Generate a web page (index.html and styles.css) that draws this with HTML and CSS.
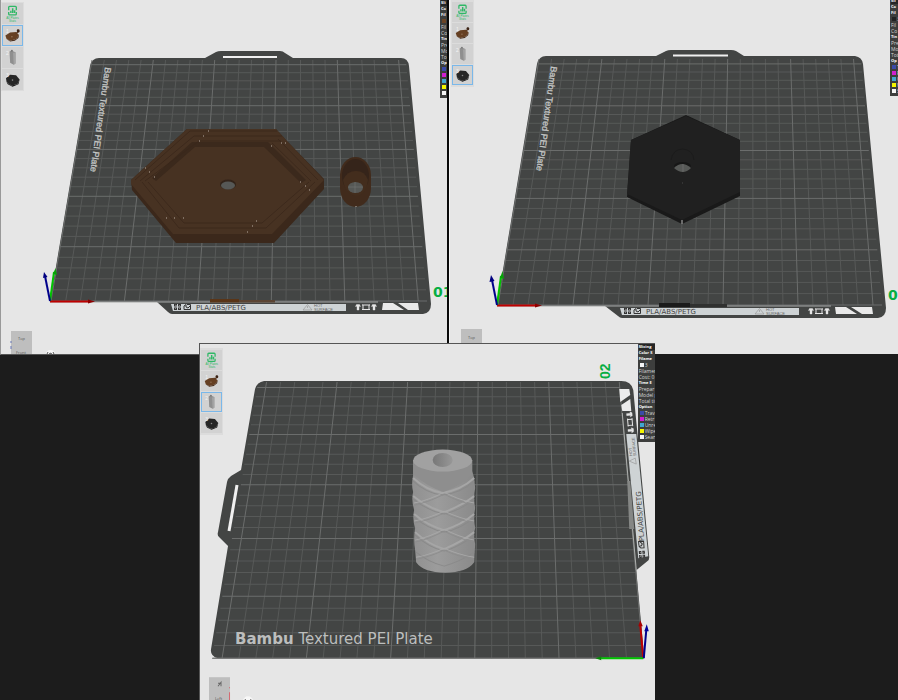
FILE: index.html
```html
<!DOCTYPE html>
<html lang="en">
<head>
    <meta charset="UTF-8">
    <meta name="viewport" content="width=device-width, initial-scale=1.0">
    <title>Plate Preview</title>
    <link rel="stylesheet" href="styles.css">
</head>
<body>

    <!-- shared icons -->
    <svg class="defs" aria-hidden="true">
        <symbol id="icon-stats" viewBox="0 0 20 20">
            <path d="M6 6.500V3.500Q6 2.500 7 2.500H13Q14 2.500 14 3.500V6.500M6 8.500V10.500Q6 11.500 7 11.500H13Q14 11.500 14 10.500V8.500" fill="none" stroke="#2fb866" stroke-width="1.400"/>
            <path d="M7.500 9.500V7H9V9.500ZM9.400 9.500V4.500H11V9.500ZM11.400 9.500V6.500H13V9.500Z" fill="#2fb866"/>
        </symbol>
        <symbol id="icon-base" viewBox="2 2 16 16">
            <path d="M4 10L8 7.500L13 7L15.500 9.500L13 13L8 14.500L5 13Z" fill="#664023"/>
            <path d="M5 13L8 14.500L13 13L15.500 9.500L15 12L12 14.500L8 15Z" fill="#4a2d1a"/>
            <circle cx="9.500" cy="11" r="0.600" fill="#9b7a60"/>
            <path d="M12.500 8.500L14 6.500L14 5L15.500 6L16 7L14 8Z" fill="#573620"/>
            <circle cx="14.800" cy="6" r="1.200" fill="#3b2417"/>
        </symbol>
        <symbol id="icon-handle" viewBox="2 2 16 16">
            <path d="M7.500 5L9 4L12.500 5.500V15L11 16L8 14.500Z" fill="#8f8f8f"/>
            <path d="M10.500 6L12.500 5.500V15L11 16Z" fill="#a4a4a4"/>
            <circle cx="9.500" cy="4.300" r="0.800" fill="#777"/>
        </symbol>
        <symbol id="icon-cap" viewBox="2 2 16 16">
            <path d="M4.500 9L8 6L13 6.500L16 10L14 14L9 15L5 12Z" fill="#262626"/>
            <path d="M5 12L9 15L14 14L16 10L15 14L10 16L6 14Z" fill="#161616"/>
            <circle cx="10" cy="10.500" r="0.700" fill="#888"/>
        </symbol>
        <symbol id="strip-icons" viewBox="0 0 18 8">
            <path d="M0 1H3V3.500H0ZM4 1H7V3.500H4ZM0 4.500H3V7H0ZM4 4.500H7V7H4Z" fill="#333"/>
            <path d="M1 2L3 3M5 5L6 6M5 3L6 2M1 6L2 5" stroke="#ddd" stroke-width="0.500"/>
            <path d="M10 3V6.500H16.500V1.500H13M10 3L12 1.500V4L14 5L16 3" fill="none" stroke="#333"/>
        </symbol>
        <symbol id="heat-icons" viewBox="0 0 24 8">
            <path d="M1.500 3.500L2.500 1.500H5.500L6.500 3.500L5 3.300V7H3V3.300ZM17.500 3.500L18.500 1.500H21.500L22.500 3.500L21 3.300V7H19V3.300Z" fill="#e6e6e6" stroke="#e6e6e6" stroke-width="0.400"/>
            <rect x="9" y="2" width="6" height="4.500" fill="none" stroke="#e6e6e6"/>
            <path d="M8 2H9M8 6.500H9M15 2H16M15 6.500H16" stroke="#e6e6e6"/>
        </symbol>
    </svg>

    <main class="desktop">

        <section class="viewer viewer-first" aria-label="Plate 1">
            <svg class="scene" viewBox="1 0 446 354" preserveAspectRatio="xMidYMin meet">
                <path class="plate" d="M50 302L90 66Q92 58 99 58H205L216 52Q218 51 221 51H280Q283 51 285 53L293 58H401Q408 58 409 66L431 304Q431 313 423 314H172Q170 314 168 312L157 302Z"/>
                <path class="slot" d="M223 57H277"/>
                <g class="grid" data-quad="51 301 427 301 406 60 92 60"></g>
                <path d="M50 302H378" stroke="#a5a7a6"/>
                <text class="plate-name" transform="translate(105 67) rotate(98)">Bambu Textured PEI Plate</text>

                <path d="M171 304H346V311H173Z" fill="#ced3d5"/>
                <use href="#strip-icons" x="174" y="303" width="18" height="8"/>
                <text class="strip-text" x="196" y="310">PLA/ABS/PETG</text>
                <path d="M303 310L307.500 304.500L312 310ZM307.500 306V308" fill="none" stroke="#999" stroke-width="0.700"/>
                <text class="hot-text" x="314" y="307">HOT</text>
                <text class="hot-text" x="314" y="311">SURFACE</text>
                <use href="#heat-icons" x="354" y="303" width="24" height="8"/>
                <path d="M383 303H393L404 310H382ZM398 303H418L419 310H408Z" fill="#e9e9e9"/>
                <path d="M210 299H239V302.500H210Z" fill="#5a3517"/>
                <path d="M239 300H275V302.500H239Z" fill="#5a4433"/>

                <!-- hexagon base -->
                <path d="M131 180L187 129H276L286 140L324 179V189L274 243H176L132 190Z" fill="#3b281b"/>
                <path d="M131 180L187 129H276L286 140L324 180L272 234H173L131 184Z" fill="#473222"/>
                <path d="M152 178L192 142H268L306 180L301 183L264 147H195L156 181Z" fill="#3b291c"/>
                <g fill="none" stroke="#3a271a" stroke-width="0.800">
                    <path d="M135 180L190 131H277M140 181L194 136H282M145 181L199 141H281"/>
                    <path d="M142 182L179 228H266L315 182M148 182L184 223H262L309 182"/>
                    <path d="M272 143L311 181M278 139L318 180"/>
                </g>
                <ellipse cx="228" cy="184.500" rx="8" ry="5" fill="#33241a"/>
                <ellipse cx="228" cy="185.500" rx="7" ry="4" fill="#565856"/>
                <g class="seams">
                    <path d="M208 131h1M203 136h1M199 141h1M271 146h1M281 143h1M285 143h1M145 168h1M149 172h1M154 177h1M166 218h1M174 218h1M183 218h1M247 232h1M252 226h1M256 221h1M300 182h1M305 186h1M309 190h1"/>
                </g>

                <!-- ring -->
                <path d="M340 175A15.500 18 0 0 1 371 175V188A15.500 19 0 0 1 340 188Z" fill="#412b1c"/>
                <ellipse cx="355.500" cy="176" rx="13.500" ry="17" fill="#35241a"/>
                <path d="M343 180Q347 171 356 171Q365 171 368 180Q366 195 356 196Q345 194 343 180Z" fill="#432d1d"/>
                <ellipse cx="355.500" cy="187.500" rx="7.500" ry="5.500" fill="#565856"/>
                <path d="M348 187H363M355 182V193" stroke="#747674" stroke-width="0.600"/>
                <path d="M356 206V207" stroke="#bbb"/>

                <path class="axis axis-x" d="M50 301.500H90"/><path d="M88 299.500L95 301.500L88 303.500Z" fill="#8e0000"/>
                <path class="axis axis-y" d="M50 301L54 272"/><path d="M53 274L55.500 268L57 275Z" fill="#08a008"/>
                <path class="axis axis-z" d="M50 301L45 276"/><path d="M43 278L44 272L47.500 277Z" fill="#00007f"/>
                <text class="plate-number" x="433" y="297">01</text>

                <path d="M11 331H32V354H11Z" fill="#bebebe"/>
                <path d="M11 341V343M11 346V349" stroke="#6879b8"/>
                <text class="cube-text" x="18" y="340">Top</text>
                <text class="cube-text" x="16" y="354">Front</text>
                <circle cx="50.500" cy="355" r="5" fill="#f7f7f7"/>
                <path d="M48 352L47 354M53 352L54 354M49 354L51 353L52 355" fill="none" stroke="#555"/>
            </svg>
            <nav class="plates plates-loose" aria-label="Plates">
                <button class="plate-button" aria-label="All plates stats"><svg class="icon"><use href="#icon-stats"/></svg><span class="caption">All Plates<br>Stats</span></button>
                <button class="plate-button selected" aria-label="Plate 1"><svg class="icon"><use href="#icon-base"/></svg><span class="index">1</span></button>
                <button class="plate-button" aria-label="Plate 2"><svg class="icon"><use href="#icon-handle"/></svg><span class="index">2</span></button>
                <button class="plate-button" aria-label="Plate 3"><svg class="icon"><use href="#icon-cap"/></svg><span class="index">3</span></button>
            </nav>
            <aside class="legend legend-narrow">
                <h2>Sli</h2>
                <h3>Co</h3>
                <h3>Fil</h3>
                <p><i class="swatch brown"></i></p>
                <p>Fil</p>
                <p>Co</p>
                <h3>Tin</h3>
                <p>Pre</p>
                <p>Mo</p>
                <p>To</p>
                <h3>Op</h3>
                <p><i class="swatch blue"></i></p>
                <p><i class="swatch magenta"></i></p>
                <p><i class="swatch cyan"></i></p>
                <p><i class="swatch yellow"></i></p>
                <p><i class="swatch white"></i></p>
            </aside>
        </section>

        <section class="viewer viewer-second" aria-label="Plate 3">
            <svg class="scene" viewBox="450 0 448 354" preserveAspectRatio="xMidYMin meet">
                <path class="plate" d="M497 306L537 64Q539 56 546 56H656L666 51Q668 50 671 50H731Q734 50 736 51L744 56H855Q862 57 863 64L886 308Q886 317 878 318H622Q620 318 618 316L605 306Z"/>
                <path class="slot" d="M673 55.500H728"/>
                <g class="grid" data-quad="498 305 882 305 861 59 539 59"></g>
                <path d="M497 306H831" stroke="#a5a7a6"/>
                <text class="plate-name" transform="translate(551 66) rotate(98)">Bambu Textured PEI Plate</text>

                <path d="M620 308H799V315H622Z" fill="#ced3d5"/>
                <use href="#strip-icons" x="624" y="307" width="18" height="8"/>
                <text class="strip-text" x="646" y="314">PLA/ABS/PETG</text>
                <path d="M755 314L759.500 308.500L764 314ZM759.500 310V312" fill="none" stroke="#999" stroke-width="0.700"/>
                <text class="hot-text" x="766" y="311">HOT</text>
                <text class="hot-text" x="766" y="315">SURFACE</text>
                <use href="#heat-icons" x="807" y="307" width="24" height="8"/>
                <path d="M835 307H846L857 314H836ZM851 307H872L873 314H862Z" fill="#e9e9e9"/>
                <path d="M659 303H690V307H659Z" fill="#1b1b1b"/>
                <path d="M690 304H727V307H690Z" fill="#303130"/>

                <path d="M686 115L740 140V196L682 224L627 197L631 140Z" fill="#191919"/>
                <path d="M686 116L740 140V192L682 220L627 194L631 140Z" fill="#202020"/>
                <path d="M671 160Q673 149 683 149Q693 150 694 160" fill="none" stroke="#1b1b1b"/>
                <ellipse cx="682.500" cy="166" rx="8.500" ry="4" fill="#171717"/>
                <path d="M674 168Q682 160 691 168Q683 176 674 168Z" fill="#575957"/>
                <path d="M683 164V172" stroke="#777" stroke-width="0.600"/>
                <path d="M682 220V224" stroke="#bdbdbd"/>
                <path d="M682 183H683" stroke="#484848"/>

                <path class="axis axis-x" d="M497 305.500H537"/><path d="M535 303.500L542 305.500L535 307.500Z" fill="#8e0000"/>
                <path class="axis axis-y" d="M497 305L501 276"/><path d="M500 278L502.500 271L504 279Z" fill="#08a008"/>
                <path class="axis axis-z" d="M497 305L492 280"/><path d="M489.500 282L491 275L494.500 281Z" fill="#00007f"/>
                <text class="plate-number" x="888" y="300">0</text>

                <path d="M461 329H482V343H461Z" fill="#bebebe"/>
                <text class="cube-text" x="468" y="339">Top</text>
            </svg>
            <nav class="plates" aria-label="Plates">
                <button class="plate-button" aria-label="All plates stats"><svg class="icon"><use href="#icon-stats"/></svg><span class="caption">All Plates<br>Stats</span></button>
                <button class="plate-button" aria-label="Plate 1"><svg class="icon"><use href="#icon-base"/></svg><span class="index">1</span></button>
                <button class="plate-button" aria-label="Plate 2"><svg class="icon"><use href="#icon-handle"/></svg><span class="index">2</span></button>
                <button class="plate-button selected" aria-label="Plate 3"><svg class="icon"><use href="#icon-cap"/></svg><span class="index">3</span></button>
            </nav>
            <aside class="legend legend-edge">
                <h2>Sli</h2>
                <h3>Co</h3>
                <h3>Fil</h3>
                <p><i class="swatch black"></i>3</p>
                <p>Fil</p>
                <p>Co</p>
                <h3>Tin</h3>
                <p>Pre</p>
                <p>Mo</p>
                <p>Tot</p>
                <h3>Op</h3>
                <p><i class="swatch blue"></i>T</p>
                <p><i class="swatch magenta"></i>R</p>
                <p><i class="swatch cyan"></i>U</p>
                <p><i class="swatch yellow"></i>W</p>
                <p><i class="swatch white"></i>S</p>
            </aside>
        </section>

        <section class="viewer viewer-front" aria-label="Plate 2">
            <svg class="scene" viewBox="201 344 454 356" preserveAspectRatio="xMidYMin meet">
                <defs>
                    <linearGradient id="tube" x1="0" x2="1">
                        <stop offset="0" stop-color="#909090"/>
                        <stop offset="0.400" stop-color="#9c9c9c"/>
                        <stop offset="1" stop-color="#8a8a8a"/>
                    </linearGradient>
                    <linearGradient id="bore" x1="0" x2="1">
                        <stop offset="0" stop-color="#777"/>
                        <stop offset="1" stop-color="#979797"/>
                    </linearGradient>
                </defs>
                <path class="plate" d="M265 381H622Q632 381 634 390L650 557Q650 560 648 561L637 570L645 658H219Q211 656 212 649L229 546L220 537Q218 535 219 532L228 482Q229 478 232 476L242 470L256 389Q258 382 265 381Z"/>
                <path d="M238 485L230 531" stroke="#f0f0f0" stroke-width="3"/>
                <g class="grid" data-quad="644 658 213 658 259 382 620 382"></g>
                <path d="M214 658H644" stroke="#777977"/>
                <text class="plate-title" x="236" y="644"><tspan class="brand">Bambu</tspan> Textured PEI Plate</text>

                <path d="M620 389H630L631 395L621 402ZM622 405L631 399L632 411H623Z" fill="#ececec"/>
                <use href="#heat-icons" transform="translate(634 410) rotate(85)" width="24" height="8"/>
                <path d="M623 413L637 570" stroke="#aeb0ae" stroke-width="1"/>
                <path d="M628 481L631 481L635 529H630Z" fill="#858785"/>
                <path d="M627 434H637L649 556L639 558Z" fill="#ced3d5"/>
                <text class="hot-text" transform="translate(633 456) rotate(-95)">HOT</text>
                <text class="hot-text" transform="translate(637 456) rotate(-95)">SURFACE</text>
                <path d="M630 461L636 458L637 464Z" fill="none" stroke="#999" stroke-width="0.700"/>
                <text class="strip-text" transform="translate(645 541) rotate(-94)">PLA/ABS/PETG</text>
                <use href="#strip-icons" transform="translate(639 558) rotate(-94)" width="18" height="8"/>

                <!-- grip -->
                <path d="M414 460V475Q412 485 414 492Q412 500 415 510Q413 519 416 528Q414 540 416 550L417 562Q424 572 446 572.500Q468 572 475 562L476 544Q474 535 476 528Q474 518 476 508Q474 498 476 488L475 478L473 471V460Z" fill="url(#tube)"/>
                <g fill="none" stroke="#a6a6a6" stroke-width="2">
                    <path d="M414 478Q427 490 443 493Q462 490 475 478M414 496Q429 508 445 512Q462 506 475 496M415 514Q429 526 445 530Q462 525 475 514M416 532Q429 544 445 549Q462 542 475 532"/>
                </g>
                <g fill="none" stroke="#8a8a8a" stroke-width="1">
                    <path d="M414 481Q427 493 443 495Q462 493 475 481M414 499Q429 511 445 514Q462 510 475 499M415 517Q429 529 445 532Q462 529 475 517M416 535Q429 547 445 551Q462 546 475 535M417 552Q429 562 445 566Q462 561 475 552"/>
                </g>
                <g fill="none" stroke="#a8a8a8" stroke-width="1">
                    <path d="M415 503Q430 500 445 492Q460 500 475 503M415 521Q430 518 445 511Q460 518 475 521M416 540Q430 537 445 529Q460 537 475 540M417 557Q430 555 445 548Q460 555 475 557"/>
                </g>
                <g fill="none" stroke="#8d8d8d" stroke-width="1">
                    <path d="M415 505Q430 502 445 494Q460 502 475 505M415 523Q430 520 445 513Q460 520 475 523M416 542Q430 539 445 531Q460 539 475 542M417 559Q430 557 445 550Q460 557 475 559"/>
                </g>
                <path d="M414 460V474Q427 486 444 492Q462 486 473 474V460Z" fill="#8e8e8e"/>
                <ellipse cx="443.500" cy="460.500" rx="29.500" ry="11" fill="#a1a1a1"/>
                <ellipse cx="443.500" cy="460" rx="10" ry="7" fill="url(#bore)"/>

                <path class="axis axis-x" d="M644 658L641 625"/><path d="M639 626L641 620L643.500 626Z" fill="#a80000"/>
                <path class="axis axis-y" d="M644 658H602"/><path d="M602 656L596 658L602 660Z" fill="#078a07"/>
                <path class="axis axis-z" d="M644.500 658L647 630"/><path d="M645 631L647.500 624L649.500 631Z" fill="#00009a"/>
                <text class="plate-number number-side" transform="translate(611 379) rotate(-90)">02</text>

                <path d="M210 677H231V700H210Z" fill="#bebebe"/>
                <path d="M230.500 687V688M230.500 692V700" stroke="#d56a72"/>
                <path d="M219 686L222 682V686M219 683H222" fill="none" stroke="#666"/>
                <text class="cube-text" x="216" y="700">Left</text>
                <circle cx="249" cy="701" r="5" fill="#f7f7f7"/>
                <path d="M246 699L247 701M252 699L251 701" stroke="#555"/>
            </svg>
            <nav class="plates plates-front" aria-label="Plates">
                <button class="plate-button" aria-label="All plates stats"><svg class="icon"><use href="#icon-stats"/></svg><span class="caption">All Plates<br>Stats</span></button>
                <button class="plate-button" aria-label="Plate 1"><svg class="icon"><use href="#icon-base"/></svg><span class="index">1</span></button>
                <button class="plate-button selected" aria-label="Plate 2"><svg class="icon"><use href="#icon-handle"/></svg><span class="index">2</span></button>
                <button class="plate-button" aria-label="Plate 3"><svg class="icon"><use href="#icon-cap"/></svg><span class="index">3</span></button>
            </nav>
            <aside class="legend">
                <h2>Slicing</h2>
                <h3>Color S</h3>
                <h3>Filame</h3>
                <p><i class="swatch white"></i>3</p>
                <p>Filamer</p>
                <p>Cost: 0</p>
                <h3>Time E</h3>
                <p>Prepar</p>
                <p>Model p</p>
                <p>Total tin</p>
                <h3>Option</h3>
                <p><i class="swatch blue"></i>Trav</p>
                <p><i class="swatch magenta"></i>Retr</p>
                <p><i class="swatch cyan"></i>Unre</p>
                <p><i class="swatch yellow"></i>Wipe</p>
                <p><i class="swatch white"></i>Sean</p>
            </aside>
        </section>

    </main>

    <script src="grid.js"></script>
</body>
</html>
```
FILE: styles.css
```css
* {
    margin: 0;
    padding: 0;
    box-sizing: border-box;
}

body {
    background: #1c1c1c;
    font-family: "Open Sans", "Liberation Sans", sans-serif;
    min-height: 100vh;
}

.defs {
    position: absolute;
    width: 0;
    height: 0;
}

.desktop {
    position: relative;
    display: grid;
    grid-template-columns: 1fr 1fr;
    min-height: 100vh;
    align-items: start;
    overflow: hidden;
}

.viewer {
    position: relative;
    display: flex;
    justify-content: space-between;
    align-items: flex-start;
    background: #e6e6e6;
    overflow: hidden;
}

.viewer-first {
    border-left: 1px solid #999;
    border-right: 2px solid #0a0a0a;
    border-bottom: 1px solid #555;
}

.viewer-second {
    border-left: 1px solid #f4f4f4;
}

/* the third window lies over the other two */
.viewer-front {
    position: absolute;
    left: 22.2%;
    bottom: 0;
    width: 50.7%;
    border-top: 1px solid #555;
    border-left: 1px solid #555;
}

.scene {
    display: block;
    width: 100%;
}

.plate {
    fill: #434544;
}

.grid path {
    fill: none;
    stroke: #575958;
    stroke-width: 1;
}

.grid .major {
    stroke: #6b6d6c;
}

.slot {
    fill: none;
    stroke: #f0f0f0;
    stroke-width: 2;
}

.plate-name {
    font-family: "Liberation Sans", sans-serif;
    font-size: 9px;
    fill: #c4c6c5;
    stroke: #c4c6c5;
    stroke-width: 0.3px;
}

.plate-title {
    font-family: "DejaVu Sans", sans-serif;
    font-size: 15px;
    fill: #bcbebd;
}

.brand {
    font-weight: bold;
}

.strip-text {
    font-family: "DejaVu Sans", sans-serif;
    font-size: 7px;
    fill: #444;
}

.hot-text {
    font-family: "Liberation Sans", sans-serif;
    font-size: 4px;
    fill: #666;
}

.plate-number {
    font-family: "DejaVu Sans", sans-serif;
    font-size: 14px;
    font-weight: bold;
    fill: #06ae42;
}

.number-side {
    font-family: "Liberation Sans", sans-serif;
}

.cube-text {
    font-size: 4px;
    fill: #555;
}

.axis {
    fill: none;
    stroke-width: 2;
}

.axis-x {
    stroke: #c00000;
}

.axis-y {
    stroke: #00c400;
}

.axis-z {
    stroke: #00008b;
}

.seams {
    stroke: #b9aca2;
    stroke-width: 1;
}

/* plate list */
.plates {
    position: absolute;
    top: 0;
    left: 1px;
    display: flex;
    flex-direction: column;
    gap: 1px;
    padding: 2px 1px;
    background: #dcdcdc;
}

.plates-loose {
    top: 2px;
    left: 0;
    padding: 1px;
}

.plates-front {
    top: 4px;
    left: 0;
}

.plate-button {
    position: relative;
    width: 21px;
    height: 20px;
    background: #d2d2d2;
    border: 1px solid transparent;
}

.plates-loose .plate-button {
    height: 21px;
}

.plate-button:hover {
    background: #c8c8c8;
}

.plate-button.selected {
    border-color: #7ab8ea;
}

.icon {
    display: block;
    width: 100%;
    height: 100%;
}

.index {
    position: absolute;
    top: 2px;
    left: 3px;
    font-size: 5px;
    line-height: 6px;
    color: #f4f4f4;
}

.caption {
    position: absolute;
    left: 0;
    right: 0;
    bottom: 0;
    font-size: 3px;
    line-height: 3px;
    text-align: center;
    color: #2fb866;
}

/* slicing result */
.legend {
    position: absolute;
    top: 0;
    right: 0;
    width: 17px;
    padding: 0 0 2px 1px;
    background: #3d3e3d;
    color: #d4d4d4;
    font-size: 5px;
    line-height: 6px;
    white-space: nowrap;
    overflow: hidden;
}

.legend-narrow {
    width: 7px;
}

.legend-edge {
    width: 8px;
    margin-top: -2px;
}

.legend h2,
.legend h3 {
    font-size: 4px;
    line-height: 6px;
    color: #fff;
}

.legend h2 {
    background: #262626;
}

.legend p {
    display: flex;
    align-items: center;
    gap: 1px;
    min-height: 6px;
}

.swatch {
    flex: none;
    width: 4px;
    height: 4px;
    margin-left: 1px;
}

.brown {
    background: #6b4426;
}

.black {
    background: #222;
}

.blue {
    background: #3a4aa8;
}

.magenta {
    background: #d01fd0;
}

.cyan {
    background: #42a7d0;
}

.yellow {
    background: #f5f500;
}

.white {
    background: #f5f5f5;
}
```
FILE: grid.js
```js
// Draws the 256 mm bed grid, one line every 10 mm, in perspective.
// data-quad holds the bed corners: origin, end of u, far corner, end of v
const SIZE = 25.6;

function project(q, u, v) {
    const [x0, y0, x1, y1, x2, y2, x3, y3] = q;
    const dx1 = x1 - x2, dx2 = x3 - x2, sx = x0 - x1 + x2 - x3;
    const dy1 = y1 - y2, dy2 = y3 - y2, sy = y0 - y1 + y2 - y3;
    const det = dx1 * dy2 - dx2 * dy1;
    const g = (sx * dy2 - dx2 * sy) / det;
    const h = (dx1 * sy - sx * dy1) / det;
    const w = g * u + h * v + 1;
    const x = ((x1 - x0 + g * x1) * u + (x3 - x0 + h * x3) * v + x0) / w;
    const y = ((y1 - y0 + g * y1) * u + (y3 - y0 + h * y3) * v + y0) / w;
    return x.toFixed(1) + ' ' + y.toFixed(1);
}

function addPath(group, d, name) {
    const path = document.createElementNS('http://www.w3.org/2000/svg', 'path');
    path.setAttribute('d', d);
    path.setAttribute('class', name);
    group.appendChild(path);
}

document.querySelectorAll('.grid').forEach(function (group) {
    const quad = group.dataset.quad.split(' ').map(Number);
    let minor = '';
    let major = '';
    for (let i = 0; i <= 25; i++) {
        const t = i / SIZE;
        const lines = 'M' + project(quad, t, 0) + 'L' + project(quad, t, 1) +
            'M' + project(quad, 0, t) + 'L' + project(quad, 1, t);
        if (i % 5 === 0) {
            major += lines;
        } else {
            minor += lines;
        }
    }
    addPath(group, minor, 'minor');
    addPath(group, major, 'major');
});
```
